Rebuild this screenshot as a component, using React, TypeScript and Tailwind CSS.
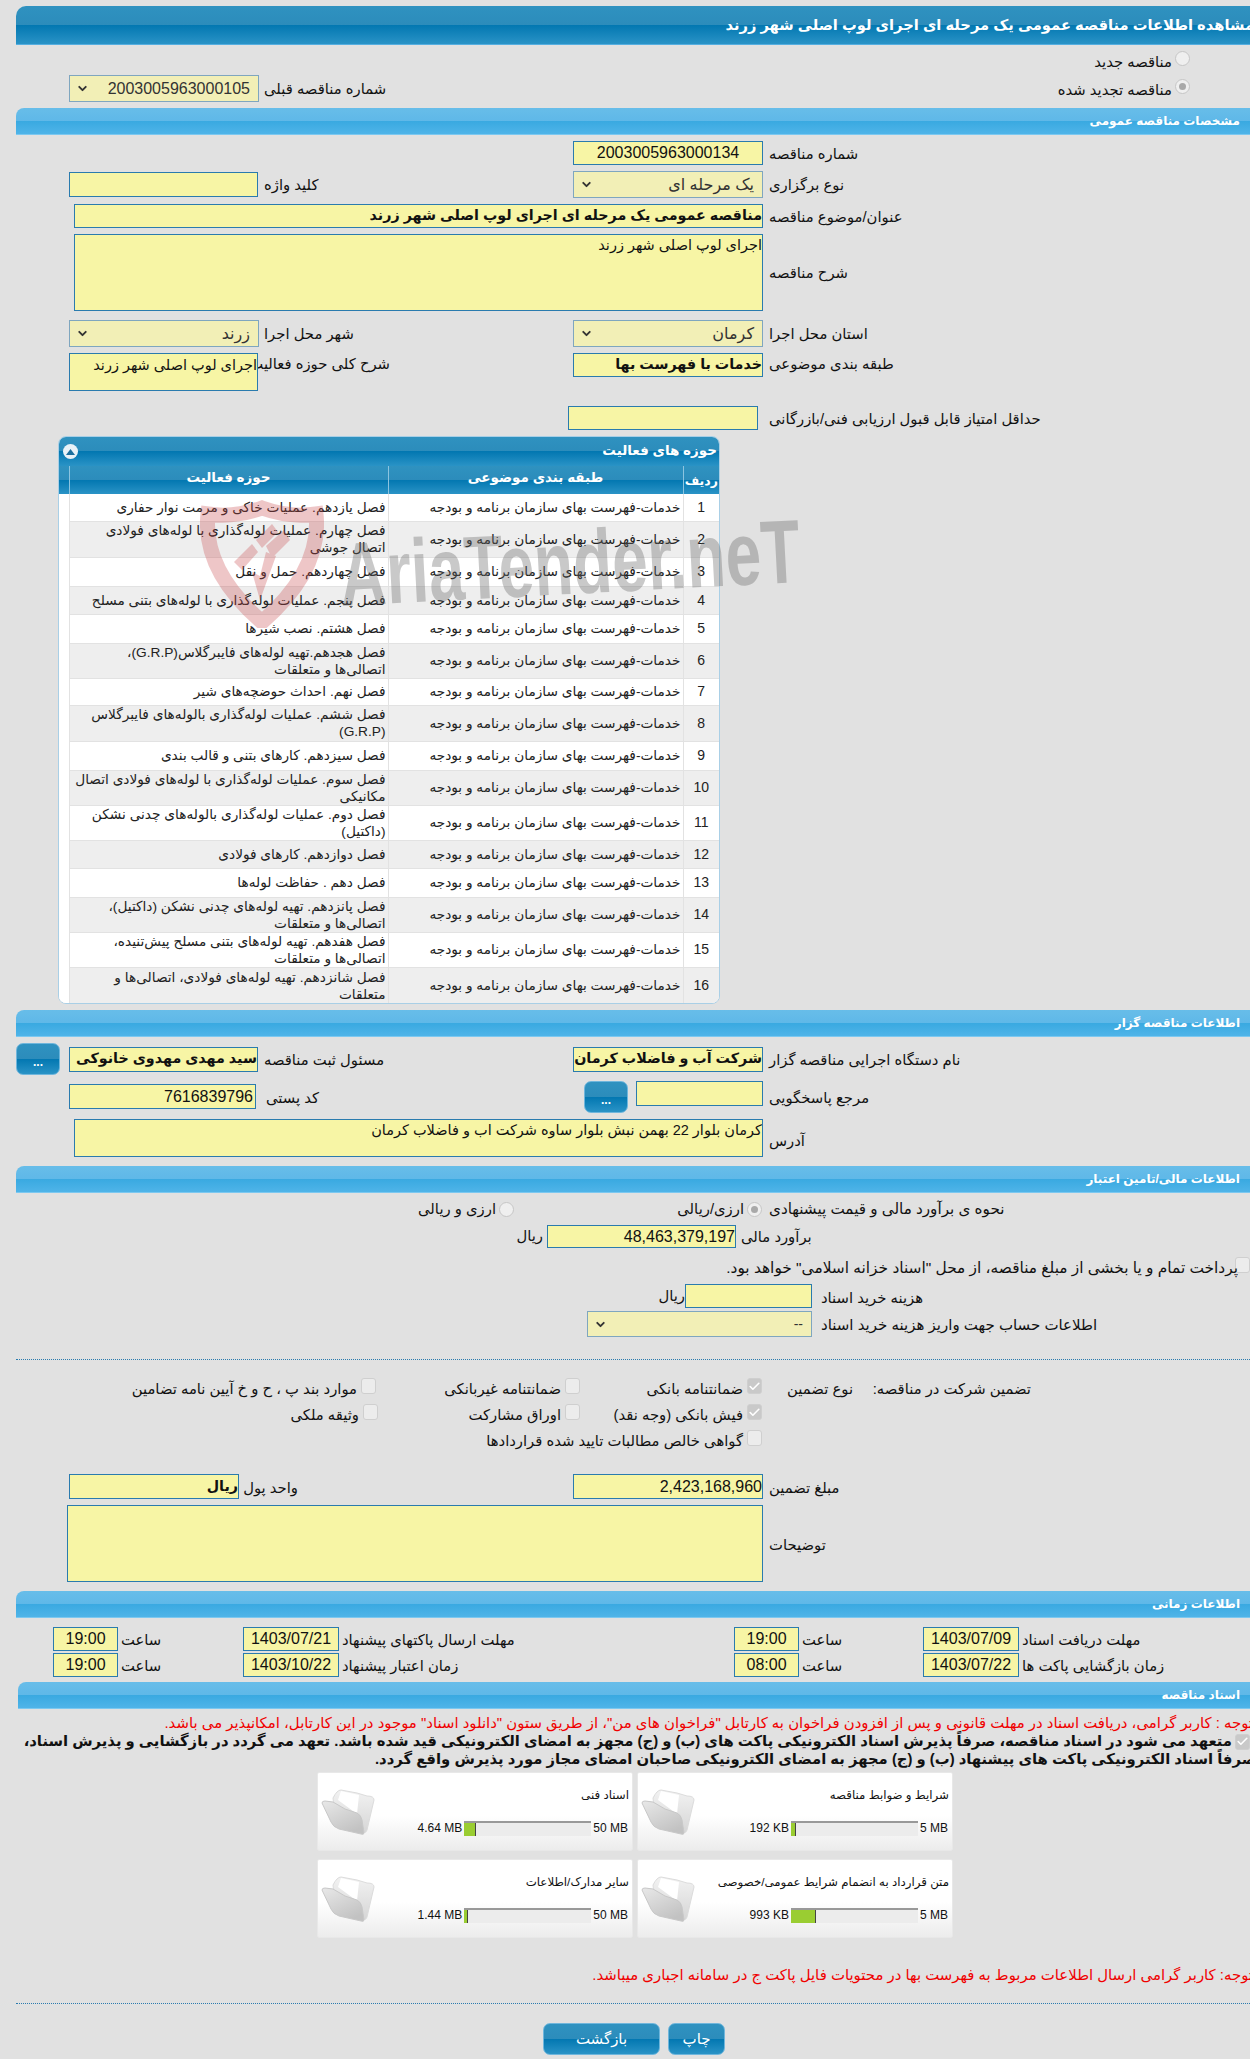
import type { ReactNode } from 'react'
import { Check, ChevronDown } from 'lucide-react'

const DARK_BAR = 'bg-[linear-gradient(#2f92c0_0%,#2c8cbb_50%,#0277b1_50%,#2a93c6_100%)]'
const LIGHT_BAR = 'bg-[linear-gradient(#67bde9_0%,#5fb8e8_50%,#39a9e1_50%,#4fb4e8_100%)]'

const CATEGORY = 'خدمات-فهرست بهای سازمان برنامه و بودجه'

const ACTIVITIES = [
  { h: 'h-[27px]', text: 'فصل یازدهم. عملیات خاکی و مرمت نوار حفاری' },
  { h: 'h-[36px]', text: 'فصل چهارم. عملیات لوله‌گذاری با لوله‌های فولادی اتصال جوشی' },
  { h: 'h-[29px]', text: 'فصل چهاردهم. حمل و نقل' },
  { h: 'h-[28px]', text: 'فصل پنجم. عملیات لوله‌گذاری با لوله‌های بتنی مسلح' },
  { h: 'h-[29px]', text: 'فصل هشتم. نصب شیرها' },
  { h: 'h-[35px]', text: 'فصل هجدهم.تهیه لوله‌های فایبرگلاس(G.R.P)، اتصالی‌ها و متعلقات' },
  { h: 'h-[27px]', text: 'فصل نهم. احداث حوضچه‌های شیر' },
  { h: 'h-[36px]', text: 'فصل ششم. عملیات لوله‌گذاری بالوله‌های فایبرگلاس (G.R.P)' },
  { h: 'h-[29px]', text: 'فصل سیزدهم. کارهای بتنی و قالب بندی' },
  { h: 'h-[35px]', text: 'فصل سوم. عملیات لوله‌گذاری با لوله‌های فولادی اتصال مکانیکی' },
  { h: 'h-[35px]', text: 'فصل دوم. عملیات لوله‌گذاری بالوله‌های چدنی نشکن (داکتیل)' },
  { h: 'h-[28px]', text: 'فصل دوازدهم. کارهای فولادی' },
  { h: 'h-[29px]', text: 'فصل دهم . حفاظت لوله‌ها' },
  { h: 'h-[35px]', text: 'فصل پانزدهم. تهیه لوله‌های چدنی نشکن (داکتیل)، اتصالی‌ها و متعلقات' },
  { h: 'h-[34px]', text: 'فصل هفدهم. تهیه لوله‌های بتنی مسلح پیش‌تنیده، اتصالی‌ها و متعلقات' },
  { h: 'h-[37px]', text: 'فصل شانزدهم. تهیه لوله‌های فولادی، اتصالی‌ها و متعلقات' },
]

const DOCS = [
  { title: 'شرایط و ضوابط مناقصه', used: '192 KB', max: '5 MB', pct: 3.75 },
  { title: 'اسناد فنی', used: '4.64 MB', max: '50 MB', pct: 9.3 },
  { title: 'متن قرارداد به انضمام شرایط عمومی/خصوصی', used: '993 KB', max: '5 MB', pct: 19.4 },
  { title: 'سایر مدارک/اطلاعات', used: '1.44 MB', max: '50 MB', pct: 2.9 },
]

function Bar({ children }: { children: ReactNode }) {
  return (
    <div className={`flex h-[27px] items-center rounded-tl-[8px] border-b border-[#7cc8f0] pr-[10px] text-[12px] font-bold text-white ${LIGHT_BAR}`}>
      {children}
    </div>
  )
}

// yellow read-only field, width, height and font size come from the caller
function Box({ className = '', children }: { className?: string; children?: ReactNode }) {
  return (
    <div className={`flex shrink-0 overflow-hidden whitespace-nowrap border border-[#2a7bae] bg-[#f7f5a5] ${className}`}>
      {children}
    </div>
  )
}

function Pick({ className = '', children }: { className?: string; children?: ReactNode }) {
  return (
    <div className={`flex shrink-0 items-center justify-between whitespace-nowrap border border-[#7fa6bf] bg-[#f2efb6] pl-[6px] pr-[8px] text-[#333] ${className}`}>
      <span>{children}</span>
      <ChevronDown size={13} strokeWidth={3.5} className="text-[#333]" />
    </div>
  )
}

function Label({ className = 'pt-[3px]', w, children }: { className?: string; w: string; children: ReactNode }) {
  return <div className={`shrink-0 whitespace-nowrap text-left ${w} ${className}`}>{children}</div>
}

function Radio({ on = false }: { on?: boolean }) {
  return (
    <span className="flex h-[15px] w-[15px] shrink-0 items-center justify-center rounded-full border border-[#c6c6c6] bg-[#efefef]">
      {on && <span className="h-[7px] w-[7px] rounded-full bg-[#a9a9a9]" />}
    </span>
  )
}

function Tick({ on = false, className = '' }: { on?: boolean; className?: string }) {
  return (
    <span className={`flex h-[16px] w-[15px] shrink-0 items-center justify-center rounded-[3px] border border-[#cfcfcf] ${on ? 'bg-[#c9c9c9]' : 'bg-[#ececec]'} ${className}`}>
      {on && <Check size={13} strokeWidth={3} className="text-white" />}
    </span>
  )
}

function SmallButton({ className = '' }: { className?: string }) {
  return (
    <div className={`flex h-[32px] w-[44px] shrink-0 items-center justify-center rounded-[7px] border border-[#6fb6dc] pt-[5px] text-[12px] font-bold text-white ${DARK_BAR} ${className}`}>
      ...
    </div>
  )
}

function GuaranteeItem({ on, w, children }: { on?: boolean; w: string; children: ReactNode }) {
  return (
    <div className={`flex shrink-0 items-start gap-[4px] ${w}`}>
      <Tick on={on} />
      <span className="whitespace-nowrap">{children}</span>
    </div>
  )
}

function Folder({ id }: { id: string }) {
  return (
    <svg width="54" height="48" viewBox="0 0 54 48" className="shrink-0">
      <defs>
        <linearGradient id={`back-${id}`} x1="0" y1="0" x2="0" y2="1">
          <stop offset="0" stopColor="#f2f2f2" />
          <stop offset="1" stopColor="#d6d6d6" />
        </linearGradient>
        <linearGradient id={`front-${id}`} x1="0" y1="0" x2="0.6" y2="1">
          <stop offset="0" stopColor="#e8e8e8" />
          <stop offset="1" stopColor="#c2c2c2" />
        </linearGradient>
      </defs>
      <path d="M12 10 Q16 2 20 2 L36 5 L46 8 Q53 8 53 12 L46 42 Q45 46 40 44 L14 28 Z" fill={`url(#back-${id})`} stroke="#dcdcdc" />
      <path d="M17 12 L20 3 L38 7 L36 26 Z" fill="#ffffff" />
      <path d="M1 15 Q1 13 4 13 L12 14 L24 21 L36 25 Q40 27 41 32 L43 45 Q43 47 40 46 L18 41 Q12 39 10 34 Z" fill={`url(#front-${id})`} stroke="#c8c8c8" />
    </svg>
  )
}

function DocCard({ doc, id }: { doc: (typeof DOCS)[number]; id: string }) {
  return (
    <div className="flex h-[79px] justify-between rounded-[2px] border border-[#e8e8e8] bg-[linear-gradient(#ffffff_0%,#ffffff_55%,#ececec_100%)] pl-[3px] pr-[3px]">
      <div className="pt-[13px]">
        <div className="whitespace-nowrap text-[11.8px] leading-[18px]">{doc.title}</div>
        <div className="mt-[15px] flex items-center gap-[2px] text-[12px]">
          <span className="whitespace-nowrap pr-[1px]" dir="ltr">{doc.max}</span>
          <div className="flex h-[15px] w-[127px] flex-row-reverse border-t-2 border-[#999] bg-[#ececec]">
            <div className="h-full border-r border-[#444] bg-[#9acd32]" style={{ width: `${doc.pct}%` }} />
          </div>
          <span className="whitespace-nowrap" dir="ltr">{doc.used}</span>
        </div>
      </div>
      <div className="pt-[15px]">
        <Folder id={id} />
      </div>
    </div>
  )
}

function ActivityPanel() {
  return (
    <div className="ml-[42px] mr-auto mt-[6px] h-[568px] w-[662px] overflow-hidden rounded-[8px] border border-[#a9cfe6] bg-white">
      <div className={`flex h-[29px] items-center justify-between pl-[4px] pr-[2px] text-[13.5px] font-bold text-white ${DARK_BAR}`}>
        <span>حوزه های فعالیت</span>
        <span className="flex h-[15px] w-[15px] items-center justify-center rounded-full bg-[#e8f2f8]">
          <svg width="9" height="6" viewBox="0 0 9 6"><path d="M4.5 0 L9 6 L0 6 Z" fill="#1c6f9e" /></svg>
        </span>
      </div>
      <table className="w-[660px] table-fixed border-collapse">
        <colgroup>
          <col className="w-[36px]" />
          <col className="w-[295px]" />
          <col className="w-[319px]" />
          <col className="w-[10px]" />
        </colgroup>
        <thead>
          <tr className={`h-[28px] text-[13.5px] font-bold text-white ${DARK_BAR}`}>
            <th className="border-l border-[#8cc4e0] pt-[3px] text-[12.5px] font-bold">ردیف</th>
            <th className="border-l border-[#8cc4e0] pb-[3px] font-bold">طبقه بندی موضوعی</th>
            <th className="border-l border-[#8cc4e0] pb-[3px] font-bold">حوزه فعالیت</th>
            <th />
          </tr>
        </thead>
        <tbody className="text-[13.7px] leading-[17px] text-[#222]">
          {ACTIVITIES.map((row, i) => (
            <tr key={i} className={`${row.h} ${i % 2 === 1 ? 'bg-[#eeeeee]' : 'bg-white'}`}>
              <td className="border-b border-l border-[#e2e2e2] text-center text-[14px]">{i + 1}</td>
              <td className="overflow-hidden whitespace-nowrap border-b border-l border-[#e2e2e2] pr-[2px]">{CATEGORY}</td>
              <td className="border-b border-l border-[#e2e2e2] pl-[4px] pr-[2px]">{row.text}</td>
              <td className="bg-white" />
            </tr>
          ))}
        </tbody>
      </table>
    </div>
  )
}

export default function App() {
  return (
    <div
      dir="rtl"
      className="relative h-[2059px] w-[1250px] overflow-hidden bg-[#e1e1e1] pl-[16px] pt-[6px] font-['Liberation_Sans','DejaVu_Sans',sans-serif] text-[14.8px] text-[#111]"
    >
      {/* page title, runs a little past the right edge like the original */}
      <div className={`flex h-[39px] items-center rounded-tl-[10px] border-b border-[#55aee0] text-[14.7px] font-bold text-white ${DARK_BAR}`}>
        <span className="-mr-[4px] whitespace-nowrap">مشاهده اطلاعات مناقصه عمومی یک مرحله ای اجرای لوپ اصلی شهر زرند</span>
      </div>

      <div className="flex h-[30px] items-start gap-[3px] pr-[60px] pt-[6px]">
        <Radio />
        <span>مناقصه جدید</span>
      </div>
      <div className="flex h-[27px]">
        <div className="flex items-start gap-[3px] pr-[60px] pt-[4px]">
          <Radio on />
          <span>مناقصه تجدید شده</span>
        </div>
        <div className="ml-[53px] mr-auto flex items-center gap-[5px]">
          <Label w="w-[126px]" className="pt-[1px]">شماره مناقصه قبلی</Label>
          <Pick className="h-[27px] w-[190px] text-[16px]">2003005963000105</Pick>
        </div>
      </div>

      <div className="mt-[6px]">
        <Bar>مشخصات مناقصه عمومی</Bar>
      </div>

      <div className="mt-[6px] flex h-[24px] items-center gap-[6px]">
        <Label w="w-[481px]">شماره مناقصه</Label>
        <Box className="h-[24px] w-[190px] items-center justify-center text-[16px]">2003005963000134</Box>
      </div>

      <div className="mt-[6px] flex h-[27px] items-center">
        <Label w="w-[481px]" className="pt-[1px]">نوع برگزاری</Label>
        <Pick className="mr-[6px] h-[27px] w-[190px] text-[16px]">یک مرحله ای</Pick>
        <div className="ml-[53px] mr-auto flex items-center gap-[6px]">
          <Label w="w-[126px]" className="pt-[1px]">کلید واژه</Label>
          <Box className="h-[25px] w-[189px]" />
        </div>
      </div>

      <div className="mt-[6px] flex h-[24px] items-center gap-[6px]">
        <Label w="w-[481px]">عنوان/موضوع مناقصه</Label>
        <Box className="h-[24px] w-[689px] items-center text-[14.3px] font-bold">مناقصه عمومی یک مرحله ای اجرای لوپ اصلی شهر زرند</Box>
      </div>

      <div className="mt-[6px] flex h-[77px] items-center gap-[6px]">
        <Label w="w-[481px]" className="pt-[2px]">شرح مناقصه</Label>
        <Box className="h-[77px] w-[689px] text-[14.5px]">اجرای لوپ اصلی شهر زرند</Box>
      </div>

      <div className="mt-[9px] flex h-[27px] items-center">
        <Label w="w-[481px]" className="pt-[1px]">استان محل اجرا</Label>
        <Pick className="mr-[6px] h-[27px] w-[190px] text-[16px]">کرمان</Pick>
        <div className="ml-[53px] mr-auto flex items-center gap-[5px]">
          <Label w="w-[126px]" className="pt-[1px]">شهر محل اجرا</Label>
          <Pick className="h-[27px] w-[190px] text-[16px]">زرند</Pick>
        </div>
      </div>

      <div className="mt-[6px] flex h-[38px] items-start">
        <Label w="w-[481px]" className="pt-0">طبقه بندی موضوعی</Label>
        <Box className="mr-[6px] h-[24px] w-[190px] items-center text-[14.3px] font-bold">خدمات با فهرست بها</Box>
        <div className="ml-[53px] mr-auto flex items-start gap-[6px]">
          <Label w="w-[126px]" className="pt-0">شرح کلی حوزه فعالیت</Label>
          <Box className="h-[38px] w-[189px] pt-[1px] text-[14.5px]">اجرای لوپ اصلی شهر زرند</Box>
        </div>
      </div>

      <div className="mt-[15px] flex h-[24px] items-center gap-[11px]">
        <Label w="w-[481px]">حداقل امتیاز قابل قبول ارزیابی فنی/بازرگانی</Label>
        <Box className="h-[24px] w-[190px]" />
      </div>

      <ActivityPanel />

      <div className="mt-[6px]">
        <Bar>اطلاعات مناقصه گزار</Bar>
      </div>

      <div className="mt-[6px] flex h-[32px] items-center">
        <Label w="w-[481px]">نام دستگاه اجرایی مناقصه گزار</Label>
        <Box className="mr-[6px] h-[25px] w-[190px] items-center text-[14.3px] font-bold">شرکت آب و فاضلاب کرمان</Box>
        <div className="mr-auto flex items-center">
          <Label w="w-[122px]">مسئول ثبت مناقصه</Label>
          <Box className="mr-[6px] h-[25px] w-[189px] items-center text-[14.3px] font-bold">سید مهدی مهدوی خانوکی</Box>
          <SmallButton className="mr-[9px]" />
        </div>
      </div>

      <div className="mt-[6px] flex h-[32px] items-start">
        <Label w="w-[481px]" className="pt-[6px]">مرجع پاسخگویی</Label>
        <Box className="mr-[6px] h-[25px] w-[127px]" />
        <SmallButton className="mr-[8px]" />
        <div className="ml-[53px] mr-auto flex items-center pt-[3px]">
          <Label w="w-[61px]">کد پستی</Label>
          <Box className="mr-[10px] h-[25px] w-[187px] items-center px-[2px] text-[16px]">7616839796</Box>
        </div>
      </div>

      <div className="mt-[6px] flex h-[38px] items-end gap-[6px]">
        <Label w="w-[481px]" className="pb-[5px]">آدرس</Label>
        <Box className="h-[38px] w-[689px] text-[14.5px]">کرمان بلوار 22 بهمن نبش بلوار ساوه شرکت اب و فاضلاب کرمان</Box>
      </div>

      <div className="mt-[9px]">
        <Bar>اطلاعات مالی/تامین اعتبار</Bar>
      </div>

      <div className="mt-[7px] flex h-[18px] items-center">
        <Label w="w-[481px]" className="text-[15.2px]">نحوه ی برآورد مالی و قیمت پیشنهادی</Label>
        <div className="mr-[7px] flex w-[248px] items-center gap-[3px]">
          <Radio on />
          <span>ارزی/ریالی</span>
        </div>
        <div className="flex items-center gap-[3px]">
          <Radio />
          <span>ارزی و ریالی</span>
        </div>
      </div>

      <div className="mt-[7px] flex h-[23px] items-center">
        <Label w="w-[509px]" className="pt-[1px]">برآورد مالی</Label>
        <Box className="mr-[5px] h-[23px] w-[189px] items-center text-[16px]">48,463,379,197</Box>
        <span className="mr-[4px]">ریال</span>
      </div>

      <div className="mt-[9px] flex h-[15px] items-start">
        <Tick className="-ml-[3px]" />
        <span className="-mt-[1px] whitespace-nowrap text-[15.4px]">پرداخت تمام و یا بخشی از مبلغ مناقصه، از محل "اسناد خزانه اسلامی" خواهد بود.</span>
      </div>

      <div className="mt-[12px] flex h-[24px] items-center">
        <Label w="w-[429px]" className="pt-[4px]">هزینه خرید اسناد</Label>
        <Box className="mr-[9px] h-[24px] w-[127px]" />
        <span>ریال</span>
      </div>

      <div className="mt-[3px] flex h-[26px] items-center">
        <Label w="w-[429px]" className="pt-[3px] text-[15px]">اطلاعات حساب جهت واریز هزینه خرید اسناد</Label>
        <Pick className="mr-[9px] h-[26px] w-[225px] text-[14px]">--</Pick>
      </div>

      <div className="mt-[22px] border-t border-dotted border-[#2a7bae]" />

      <div className="mt-[18px] flex h-[26px] items-start">
        <div className="w-[219px] shrink-0" />
        <span className="w-[178px] shrink-0 whitespace-nowrap">تضمین شرکت در مناقصه:</span>
        <span className="w-[91px] shrink-0 whitespace-nowrap">نوع تضمین</span>
        <GuaranteeItem on w="w-[182px]">ضمانتنامه بانکی</GuaranteeItem>
        <GuaranteeItem w="w-[204px]">ضمانتنامه غیربانکی</GuaranteeItem>
        <GuaranteeItem w="w-[240px]">موارد بند پ ، ح و خ آیین نامه تضامین</GuaranteeItem>
      </div>
      <div className="flex h-[26px] items-start">
        <div className="w-[488px] shrink-0" />
        <GuaranteeItem on w="w-[182px]">فیش بانکی (وجه نقد)</GuaranteeItem>
        <GuaranteeItem w="w-[202px]">اوراق مشارکت</GuaranteeItem>
        <GuaranteeItem w="w-[100px]">وثیقه ملکی</GuaranteeItem>
      </div>
      <div className="flex h-[26px] items-start">
        <div className="w-[488px] shrink-0" />
        <GuaranteeItem w="w-[300px]">گواهی خالص مطالبات تایید شده قراردادها</GuaranteeItem>
      </div>

      <div className="mt-[18px] flex h-[25px] items-center">
        <Label w="w-[481px]">مبلغ تضمین</Label>
        <Box className="mr-[6px] h-[25px] w-[190px] items-center text-[16px]">2,423,168,960</Box>
        <div className="ml-[53px] mr-auto flex items-center gap-[5px]">
          <Label w="w-[54px]">واحد پول</Label>
          <Box className="h-[25px] w-[170px] items-center text-[14.3px] font-bold">ریال</Box>
        </div>
      </div>

      <div className="mt-[6px] flex h-[77px] items-center gap-[6px]">
        <Label w="w-[481px]">توضیحات</Label>
        <Box className="h-[77px] w-[696px]" />
      </div>

      <div className="mt-[9px]">
        <Bar>اطلاعات زمانی</Bar>
      </div>

      <div className="mt-[9px] flex h-[24px] items-center gap-[3px]">
        <Label w="w-[228px]">مهلت دریافت اسناد</Label>
        <Box className="h-[24px] w-[96px] items-center justify-center text-[16px]">1403/07/09</Box>
        <Label w="w-[118px]">ساعت</Label>
        <Box className="h-[24px] w-[65px] items-center justify-center text-[16px]">19:00</Box>
        <Label w="w-[389px]">مهلت ارسال پاکتهای پیشنهاد</Label>
        <Box className="h-[24px] w-[96px] items-center justify-center text-[16px]">1403/07/21</Box>
        <Label w="w-[119px]">ساعت</Label>
        <Box className="h-[24px] w-[65px] items-center justify-center text-[16px]">19:00</Box>
      </div>
      <div className="mt-[2px] flex h-[24px] items-center gap-[3px]">
        <Label w="w-[228px]">زمان بازگشایی پاکت ها</Label>
        <Box className="h-[24px] w-[96px] items-center justify-center text-[16px]">1403/07/22</Box>
        <Label w="w-[118px]">ساعت</Label>
        <Box className="h-[24px] w-[65px] items-center justify-center text-[16px]">08:00</Box>
        <Label w="w-[389px]">زمان اعتبار پیشنهاد</Label>
        <Box className="h-[24px] w-[96px] items-center justify-center text-[16px]">1403/10/22</Box>
        <Label w="w-[119px]">ساعت</Label>
        <Box className="h-[24px] w-[65px] items-center justify-center text-[16px]">19:00</Box>
      </div>

      <div className="ml-[2px] mt-[5px]">
        <Bar>اسناد مناقصه</Bar>
      </div>

      <div className="mt-[5px] h-[18px] whitespace-nowrap text-[14.9px] leading-[18px] text-[#f00000]">
        <span className="-mr-[3px]">توجه : کاربر گرامی، دریافت اسناد در مهلت قانونی و پس از افزودن فراخوان به کارتابل "فراخوان های من"، از طریق ستون "دانلود اسناد" موجود در این کارتابل، امکانپذیر می باشد.</span>
      </div>

      <div className="text-[14.8px] font-bold leading-[17px]">
        <div className="flex h-[19px] items-center gap-[3px] whitespace-nowrap">
          <Tick on />
          <span>متعهد می شود در اسناد مناقصه، صرفاً پذیرش اسناد الکترونیکی پاکت های (ب) و (ج) مجهز به امضای الکترونیکی قید شده باشد. تعهد می گردد در بازگشایی و پذیرش اسناد،</span>
        </div>
        <div className="h-[19px] whitespace-nowrap">
          <span className="-mr-[6px]">صرفاً اسناد الکترونیکی پاکت های پیشنهاد (ب) و (ج) مجهز به امضای الکترونیکی صاحبان امضای مجاز مورد پذیرش واقع گردد.</span>
        </div>
      </div>

      <div className="mr-[297px] mt-[2px] grid w-[636px] grid-cols-2 gap-x-[4px] gap-y-[8px]">
        {DOCS.map((doc, i) => (
          <DocCard key={doc.title} doc={doc} id={String(i)} />
        ))}
      </div>

      <div className="mt-[28px] h-[18px] whitespace-nowrap text-[14.9px] leading-[18px] text-[#f00000]">
        <span className="-mr-[3px]">توجه: کاربر گرامی ارسال اطلاعات مربوط به فهرست بها در محتویات فایل پاکت ج در سامانه اجباری میباشد.</span>
      </div>

      <div className="mt-[19px] border-t border-dotted border-[#2a7bae]" />

      <div className="mr-[525px] mt-[19px] flex gap-[8px] text-[15px] text-white">
        <div className={`flex h-[32px] w-[57px] items-center justify-center rounded-[7px] border border-[#6fb6dc] ${DARK_BAR}`}>چاپ</div>
        <div className={`flex h-[32px] w-[117px] items-center justify-center rounded-[7px] border border-[#6fb6dc] ${DARK_BAR}`}>بازگشت</div>
      </div>

      {/* site watermark lying over the activity table */}
      <div dir="ltr" className="pointer-events-none absolute left-[200px] top-[500px] flex items-start">
        <svg width="124" height="128" viewBox="0 0 124 128" className="shrink-0 opacity-30">
          <path d="M62 8 Q90 18 116 14 Q122 70 62 122 Q2 70 8 14 Q34 18 62 8 Z" fill="none" stroke="#c8474a" strokeWidth="15" />
          <path d="M34 62 L52 44 L58 52 L42 70 Z M56 40 L72 24 L78 32 L62 48 Z M66 46 L84 30 L90 40 L72 58 Z" fill="#c8474a" />
          <path d="M52 72 L60 100 L76 56 L66 52 L60 76 Z" fill="#c8474a" />
        </svg>
        <span className="ml-[16px] mt-[30px] origin-left whitespace-nowrap text-[90px] font-bold leading-none text-[#666] opacity-35 [transform:rotate(-3deg)_scaleX(0.71)]">
          AriaTender.neT
        </span>
      </div>
    </div>
  )
}
